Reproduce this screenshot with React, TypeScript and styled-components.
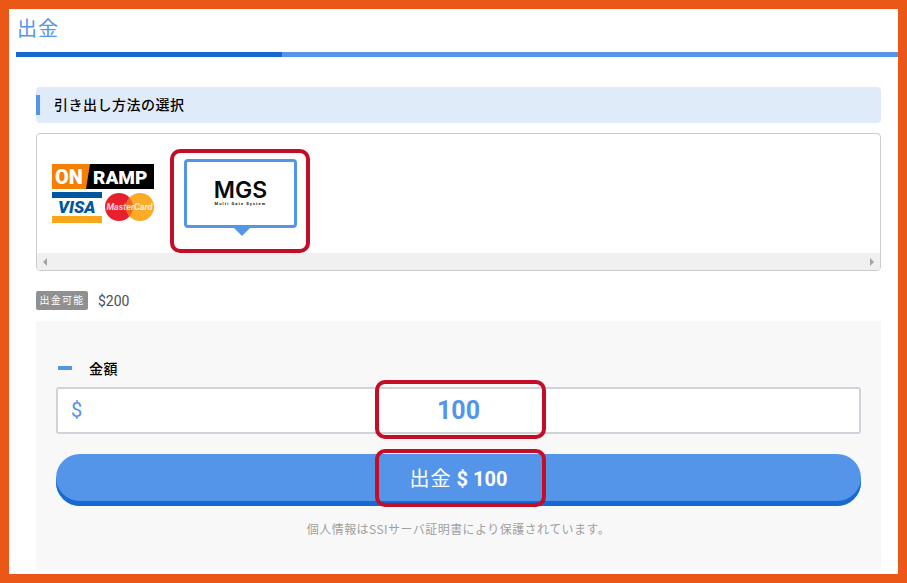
import React from "react";
import styled, { createGlobalStyle } from "styled-components";

const GlobalStyle = createGlobalStyle`
  html, body {
    margin: 0;
    padding: 0;
    background: #fff;
  }
  * {
    box-sizing: border-box;
  }
`;

const Frame = styled.div`
  position: relative;
  width: 907px;
  height: 583px;
  border: 9px solid #ea5716;
  background: #fff;
  overflow: hidden;
  font-family: Roboto, "Noto Sans CJK JP", sans-serif;
`;

const Header = styled.header`
  height: 43px;
  padding: 5px 0 0 9px;
  font-family: "Noto Sans CJK JP", sans-serif;
  font-size: 20px;
  line-height: 28px;
  font-weight: 400;
  letter-spacing: 1px;
  margin-left: -1px;
  color: #5495ea;
`;

const TitleBar = styled.div`
  display: flex;
  height: 5px;
  margin-left: 7px;
  background: #5495ea;
`;

const TitleBarDark = styled.div`
  width: 266px;
  background: #1769d2;
`;

const Content = styled.main`
  padding: 30px 17px 0 27px;
`;

const SectionHead = styled.h2`
  position: relative;
  height: 36px;
  margin: 0;
  padding-left: 18px;
  border-radius: 4px;
  background: #e0ebf9;
  font-family: "Noto Sans CJK JP", sans-serif;
  font-size: 14px;
  font-weight: 500;
  letter-spacing: 0.5px;
  line-height: 35px;
  color: #000;

  &::before {
    content: "";
    position: absolute;
    left: 0;
    top: 8px;
    width: 4px;
    height: 20px;
    background: #5495ea;
  }
`;

const MethodBox = styled.section`
  margin-top: 10px;
  height: 138px;
  border: 1px solid #ccc;
  border-radius: 4px;
  overflow: hidden;
  display: flex;
  flex-direction: column;
`;

const MethodRow = styled.div`
  flex: 1;
  display: flex;
  align-items: flex-start;
  gap: 30px;
  padding: 25px 0 0 15px;
`;

const OnrampLogo = styled.svg`
  display: block;
  width: 102px;
  height: 59px;
  margin-top: 5px;
`;

const MethodCard = styled.div`
  position: relative;
  width: 113px;
  height: 69px;
  border: 3px solid #5495ea;
  border-radius: 4px;
  background: #fff;
  text-align: center;

  &::after {
    content: "";
    position: absolute;
    left: 47px;
    bottom: -11px;
    border-style: solid;
    border-width: 8px 8px 0;
    border-color: #5495ea transparent transparent;
  }
`;

const MgsName = styled.div`
  margin-top: 17px;
  font-family: Inter, Roboto, sans-serif;
  font-size: 23px;
  line-height: 22px;
  font-weight: 600;
  color: #0a0a0a;
`;

const MgsSub = styled.div`
  font-family: Roboto, sans-serif;
  font-size: 4px;
  line-height: 5px;
  font-weight: 700;
  letter-spacing: 1.1px;
  color: #111;
`;

const ScrollTrack = styled.div`
  height: 17px;
  display: flex;
  align-items: center;
  justify-content: space-between;
  padding: 0 6px;
  background: #f0f0f0;
`;

const ScrollArrow = styled.span<{ $dir: "left" | "right" }>`
  width: 0;
  height: 0;
  border-style: solid;
  border-color: transparent #a3a3a3;
  border-width: ${(p) => (p.$dir === "left" ? "4px 4px 4px 0" : "4px 0 4px 4px")};
`;

const BalanceRow = styled.div`
  display: flex;
  align-items: center;
  gap: 10px;
  height: 19px;
  margin-top: 20px;
`;

const Badge = styled.span`
  width: 52px;
  height: 19px;
  border-radius: 2px;
  background: #909090;
  color: #fff;
  font-family: "Noto Sans CJK JP", sans-serif;
  font-size: 10px;
  line-height: 17px;
  letter-spacing: 1.2px;
  text-align: center;
  white-space: nowrap;
`;

const BalanceValue = styled.span`
  font-size: 14px;
  color: #4a4f57;
`;

const Panel = styled.section`
  margin-top: 11px;
  height: 248px;
  padding: 37px 20px 0;
  background: #f8f8f8;
`;

const FieldLabel = styled.div`
  display: flex;
  align-items: center;
  gap: 17px;
  height: 20px;
  padding-left: 2px;
  font-family: "Noto Sans CJK JP", sans-serif;
  font-size: 14px;
  font-weight: 500;
  letter-spacing: 0.5px;
  color: #000;

  &::before {
    content: "";
    width: 14px;
    height: 4px;
    background: #5495ea;
  }
`;

const AmountField = styled.div`
  position: relative;
  height: 47px;
  margin-top: 9px;
  border: 2px solid #d1d3da;
  border-radius: 3px;
  background: #fff;
  text-align: center;
`;

const Currency = styled.span`
  position: absolute;
  left: 13px;
  top: 0;
  font-size: 20px;
  font-weight: 400;
  line-height: 43px;
  color: #5495ea;
`;

const AmountValue = styled.span`
  font-size: 25px;
  font-weight: 700;
  line-height: 44px;
  color: #5495ea;
`;

const SubmitButton = styled.button`
  display: block;
  width: 100%;
  height: 52px;
  margin-top: 20px;
  padding: 0 0 5px;
  border: 0;
  border-radius: 24px;
  background: #5495ea;
  box-shadow: inset 0 -5px 0 #1769d2;
  color: #fff;
  font-family: Roboto, "Noto Sans CJK JP", sans-serif;
  font-size: 20px;
  font-weight: 700;
`;

const ButtonWord = styled.span`
  font-family: "Noto Sans CJK JP", sans-serif;
  font-weight: 400;
  letter-spacing: 1px;
`;

const Secure = styled.p`
  margin: 13px 0 0;
  text-align: center;
  font-family: "Noto Sans CJK JP", sans-serif;
  font-size: 12px;
  font-weight: 400;
  letter-spacing: 0.45px;
  line-height: 20px;
  color: #a0a0a0;
`;

// red annotation rectangles drawn over the screenshot
const Callout = styled.div<{ $x: number; $y: number; $w: number; $h: number }>`
  position: absolute;
  left: ${(p) => p.$x}px;
  top: ${(p) => p.$y}px;
  width: ${(p) => p.$w}px;
  height: ${(p) => p.$h}px;
  border: 4px solid #c40d26;
  border-radius: 10px;
  pointer-events: none;
`;

const Onramp = () => (
  <OnrampLogo viewBox="0 0 102 59">
    <rect x="0" y="0" width="40" height="25" fill="#f57f00" />
    <polygon points="38,0 102,0 102,25 34,25" fill="#000" />
    <text x="3" y="19.5" fontFamily="Roboto, sans-serif" fontSize="20" fontWeight="900" fill="#fff">ON</text>
    <text x="41" y="19.5" fontFamily="Roboto, sans-serif" fontSize="19" fontWeight="900" fill="#fff">RAMP</text>
    <rect x="0" y="28" width="50" height="6" fill="#00579f" />
    <text x="6" y="49" fontFamily="Roboto, sans-serif" fontSize="17" fontWeight="900" fontStyle="italic" fill="#00579f">VISA</text>
    <rect x="0" y="52" width="50" height="7" fill="#faa61a" />
    <circle cx="67" cy="43" r="14" fill="#e8202e" />
    <circle cx="88" cy="43" r="14" fill="#fbab26" />
    <path d="M77.5 33.7a14 14 0 0 1 0 18.6a14 14 0 0 1 0-18.6z" fill="#f26a21" />
    <text x="77.5" y="46" textAnchor="middle" fontFamily="Roboto, sans-serif" fontSize="9" fontWeight="700" fontStyle="italic" fill="#fff" fillOpacity="0.8">MasterCard</text>
  </OnrampLogo>
);

export default function App() {
  return (
    <>
      <GlobalStyle />
      <Frame>
        <Header>出金</Header>
        <TitleBar>
          <TitleBarDark />
        </TitleBar>
        <Content>
          <SectionHead>引き出し方法の選択</SectionHead>
          <MethodBox>
            <MethodRow>
              <Onramp />
              <MethodCard>
                <MgsName>MGS</MgsName>
                <MgsSub>Multi Gate System</MgsSub>
              </MethodCard>
            </MethodRow>
            <ScrollTrack>
              <ScrollArrow $dir="left" />
              <ScrollArrow $dir="right" />
            </ScrollTrack>
          </MethodBox>
          <BalanceRow>
            <Badge>出金可能</Badge>
            <BalanceValue>$200</BalanceValue>
          </BalanceRow>
          <Panel>
            <FieldLabel>金額</FieldLabel>
            <AmountField>
              <Currency>$</Currency>
              <AmountValue>100</AmountValue>
            </AmountField>
            <SubmitButton>
              <ButtonWord>出金</ButtonWord> $ 100
            </SubmitButton>
            <Secure>個人情報はSSIサーバ証明書により保護されています。</Secure>
          </Panel>
        </Content>
        <Callout $x={161} $y={140} $w={140} $h={104} />
        <Callout $x={366} $y={371} $w={171} $h={59} />
        <Callout $x={366} $y={440} $w={171} $h={58} />
      </Frame>
    </>
  );
}
